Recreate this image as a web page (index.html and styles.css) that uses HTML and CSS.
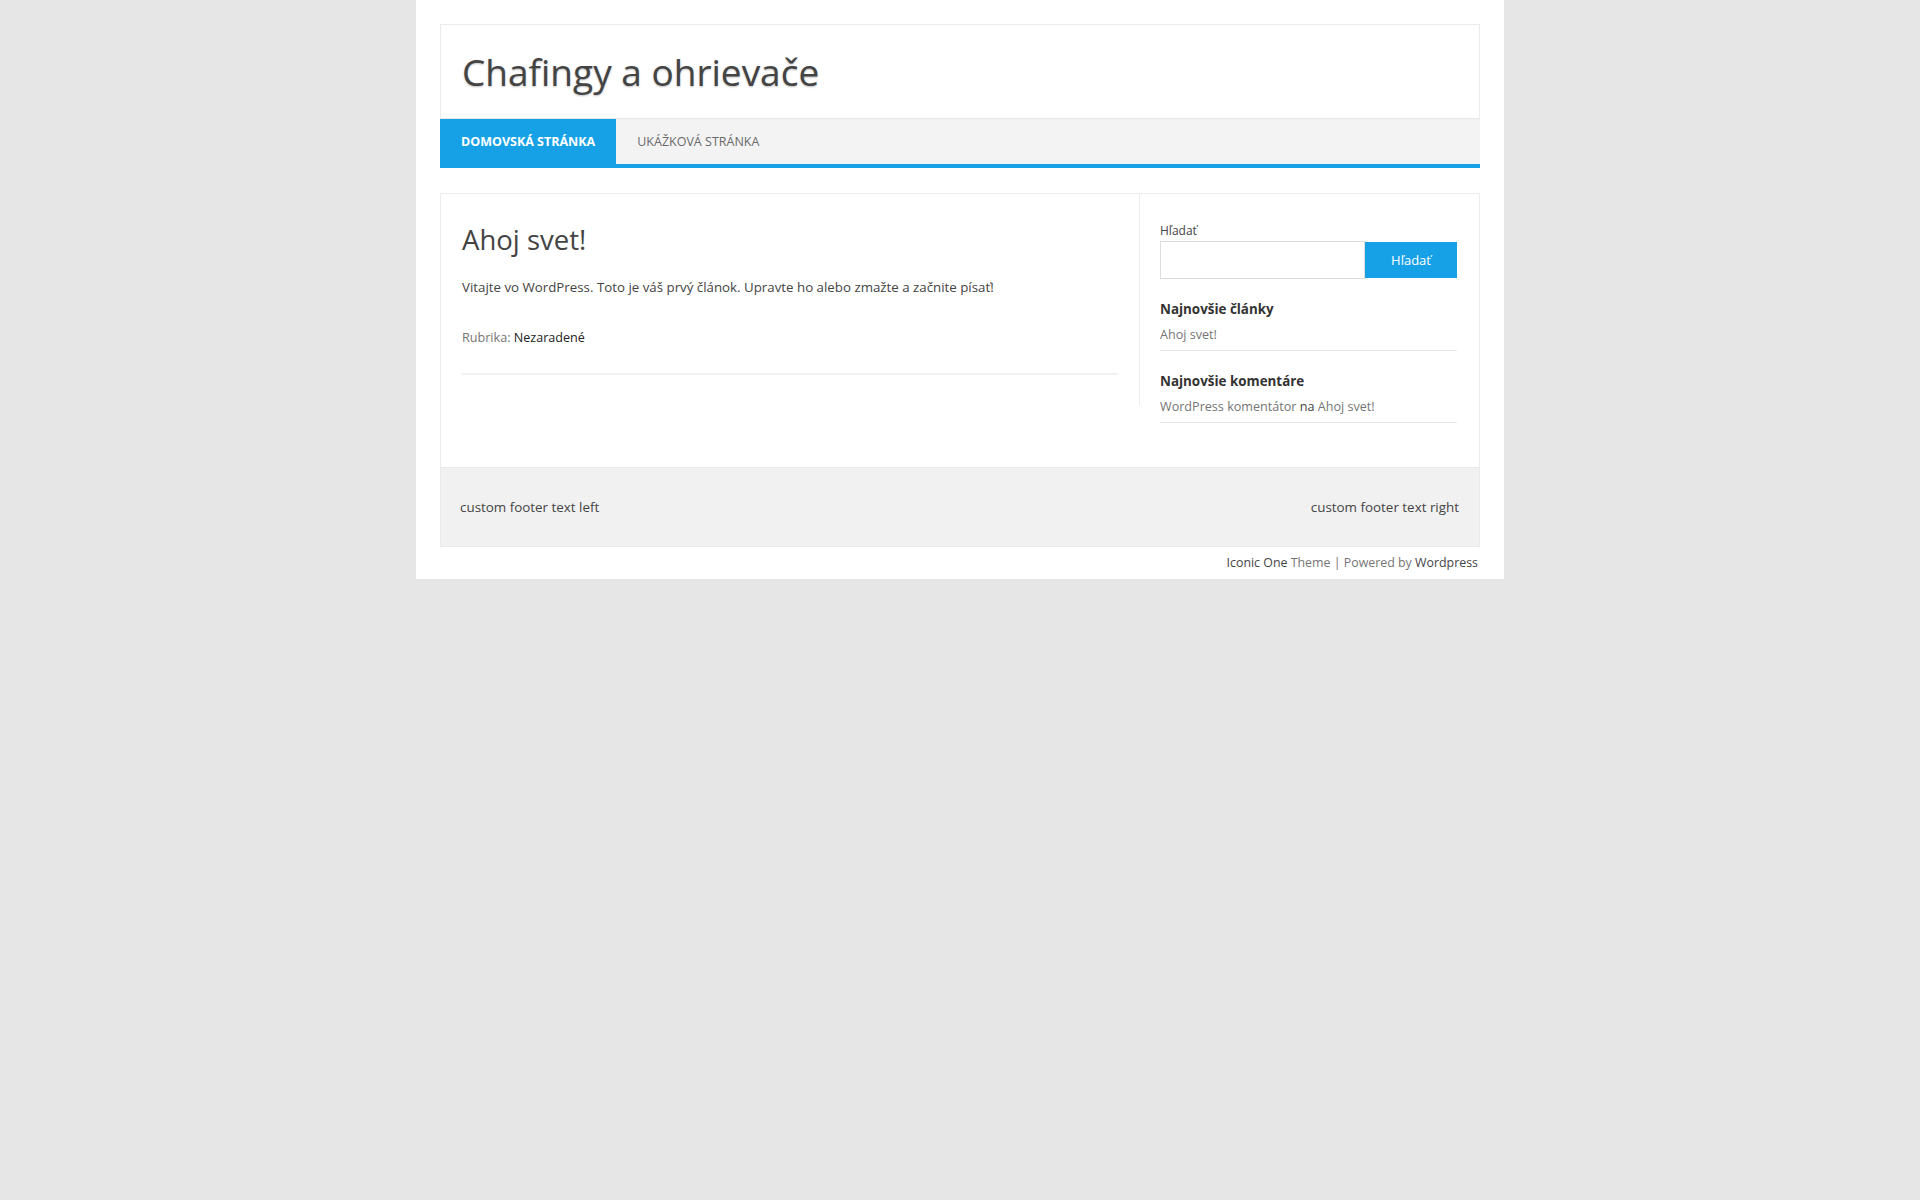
FILE: index.html
```html
<!DOCTYPE html>
<html lang="sk">
<head>
    <meta charset="UTF-8">
    <meta name="viewport" content="width=device-width, initial-scale=1.0">
    <title>Chafingy a ohrievače</title>
    <link rel="stylesheet" href="styles.css">
</head>
<body>
    <div class="site">
        <!-- hlavička -->
        <header class="site-header">
            <h1 class="site-title"><a href="#">Chafingy a ohrievače</a></h1>
        </header>
        <nav class="main-nav">
            <a href="#" class="current">Domovská stránka</a>
            <a href="#">Ukážková stránka</a>
        </nav>

        <!-- obsah -->
        <div class="site-main">
            <div class="content">
                <article class="post">
                    <h2 class="entry-title">Ahoj svet!</h2>
                    <p class="entry-text">Vitajte vo WordPress. Toto je váš prvý článok. Upravte ho alebo zmažte a začnite písať!</p>
                    <div class="entry-meta"><span class="meta-label">Rubrika:</span> <a href="#">Nezaradené</a></div>
                </article>
            </div>

            <aside class="sidebar">
                <form class="widget search-form">
                    <label for="s">Hľadať</label>
                    <div class="search-row">
                        <input type="text" id="s">
                        <button type="button">Hľadať</button>
                    </div>
                </form>
                <div class="widget">
                    <h3 class="widget-title">Najnovšie články</h3>
                    <ul>
                        <li><a href="#">Ahoj svet!</a></li>
                    </ul>
                </div>
                <div class="widget">
                    <h3 class="widget-title">Najnovšie komentáre</h3>
                    <ul>
                        <li><a href="#">WordPress komentátor</a> na <a href="#">Ahoj svet!</a></li>
                    </ul>
                </div>
            </aside>
        </div>

        <!-- pätička -->
        <footer class="site-footer">
            <div class="footer-left">custom footer text left</div>
            <div class="footer-right">custom footer text right</div>
        </footer>
        <div class="site-info">
            <a href="#">Iconic One</a> Theme | Powered by <a href="#">Wordpress</a>
        </div>
    </div>
</body>
</html>
```

FILE: styles.css
```css
body {
    margin: 0;
    background-color: #e6e6e6;
    font-family: "Open Sans", "Noto Sans", sans-serif;
    color: #444;
}

a {
    text-decoration: none;
}

.site {
    width: 1040px;
    margin: 0 auto;
    padding: 24px 24px 7px;
    background-color: #fff;
}

.site-header {
    border: 1px solid #ebebeb;
    border-bottom: none;
    padding: 21px 21px 0;
    height: 72px;
}

.site-title {
    margin: 0;
    font-size: 37px;
    font-weight: normal;
    line-height: 1.4;
}

.site-title a {
    color: #444;
    text-shadow: 0 1px 2px rgba(0, 0, 0, 0.25);
}

.main-nav {
    display: flex;
    height: 45px;
    background-color: #f3f3f3;
    border-top: 1px solid #e6e6e6;
    border-bottom: 4px solid #16a1e6;
}

.main-nav a {
    display: flex;
    align-items: center;
    padding: 0 21px;
    font-size: 12.5px;
    text-transform: uppercase;
    color: #6a6a6a;
}

.main-nav a.current {
    background-color: #16a1e6;
    color: #fff;
    font-weight: bold;
}

.site-main {
    display: flex;
    align-items: flex-start;
    margin-top: 25px;
    border: 1px solid #ececec;
    border-bottom: none;
}

.content {
    width: 656px;
    padding: 28px 21px 30px;
    border-right: 1px solid #ececec;
}

.post {
    border-bottom: 2px solid #f1f1f1;
    padding-bottom: 24px;
}

.entry-title {
    margin: 0;
    font-size: 27.5px;
    font-weight: normal;
    line-height: 36px;
    color: #444;
}

.entry-text {
    margin: 18px 0 0;
    font-size: 13.3px;
    line-height: 22px;
    color: #444;
}

.entry-meta {
    margin-top: 29px;
    font-size: 12.6px;
    line-height: 22px;
}

.meta-label {
    color: #757575;
}

.entry-meta a {
    color: #222;
}

.sidebar {
    flex: 1;
    padding: 28px 22px 44px 20px;
}

.widget {
    margin: 0;
}

.search-form label {
    display: block;
    font-size: 12px;
    line-height: 18px;
    color: #444;
}

.search-row {
    display: flex;
    align-items: center;
    margin-top: 1px;
}

.search-row input {
    width: 205px;
    height: 38px;
    box-sizing: border-box;
    margin: 0;
    border: 1px solid #ddd;
    padding: 0 8px;
}

.search-row button {
    width: 92px;
    height: 36px;
    margin: 0;
    border: none;
    background-color: #16a1e6;
    color: #fff;
    font-family: "Open Sans", "Noto Sans", sans-serif;
    font-size: 13px;
}

.widget-title {
    margin: 19px 0 0;
    font-size: 13.4px;
    font-weight: bold;
    line-height: 22px;
    color: #333;
}

.widget ul {
    list-style: none;
    margin: 0;
    padding: 0;
}

.widget li {
    padding: 6px 0;
    border-bottom: 1px solid #e6e6e6;
    font-size: 12.6px;
    line-height: 18px;
    color: #444;
}

.widget li a {
    color: #757575;
}

.site-footer {
    display: flex;
    justify-content: space-between;
    align-items: center;
    height: 78px;
    padding: 0 20px 0 19px;
    background-color: #f1f1f1;
    border: 1px solid #e9e9e9;
    font-size: 13.4px;
    color: #444;
}

.site-info {
    padding: 7px 2px 0;
    text-align: right;
    font-size: 12.4px;
    line-height: 18px;
    color: #757575;
}

.site-info a {
    color: #444;
}
```
